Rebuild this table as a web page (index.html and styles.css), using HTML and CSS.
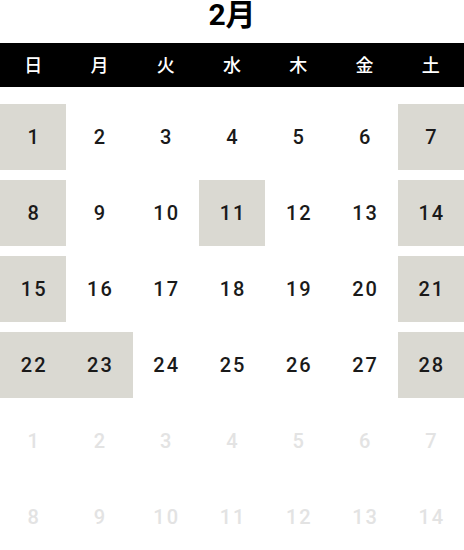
FILE: index.html
```html
<!DOCTYPE html>
<html lang="ja">
<head>
<meta charset="utf-8">
<title>2月</title>
<link rel="stylesheet" href="styles.css">
</head>
<body>
<div class="calendar">
  <h2 class="month">2月</h2>
  <div class="weekdays">
    <div>日</div><div>月</div><div>火</div><div>水</div><div>木</div><div>金</div><div>土</div>
  </div>
  <div class="days">
    <div class="day off">1</div><div class="day">2</div><div class="day">3</div><div class="day">4</div><div class="day">5</div><div class="day">6</div><div class="day off">7</div>
    <div class="day off">8</div><div class="day">9</div><div class="day">10</div><div class="day off">11</div><div class="day">12</div><div class="day">13</div><div class="day off">14</div>
    <div class="day off">15</div><div class="day">16</div><div class="day">17</div><div class="day">18</div><div class="day">19</div><div class="day">20</div><div class="day off">21</div>
    <div class="day off">22</div><div class="day off">23</div><div class="day">24</div><div class="day">25</div><div class="day">26</div><div class="day">27</div><div class="day off">28</div>
    <div class="day next">1</div><div class="day next">2</div><div class="day next">3</div><div class="day next">4</div><div class="day next">5</div><div class="day next">6</div><div class="day next">7</div>
    <div class="day next">8</div><div class="day next">9</div><div class="day next">10</div><div class="day next">11</div><div class="day next">12</div><div class="day next">13</div><div class="day next">14</div>
  </div>
</div>
</body>
</html>
```
FILE: styles.css
```css
html, body {
  margin: 0;
  padding: 0;
  background: #fff;
}
body {
  font-family: Roboto, "Noto Sans CJK JP", sans-serif;
  color: #1a1a1a;
}
.calendar {
  width: 464px;
}
.month {
  margin: 0;
  height: 43px;
  font-family: Roboto, "Noto Sans CJK JP", sans-serif;
  font-size: 30px;
  font-weight: 700;
  line-height: 30px;
  text-align: center;
  color: #000;
}
.weekdays {
  display: grid;
  grid-template-columns: repeat(7, 1fr);
  height: 44px;
  background: #000;
  color: #fff;
  font-family: "Noto Sans CJK JP", sans-serif;
  font-size: 18px;
  font-weight: 500;
}
.weekdays div {
  display: flex;
  align-items: center;
  justify-content: center;
  padding-bottom: 3px;
}
.days {
  display: grid;
  grid-template-columns: repeat(7, 1fr);
  grid-auto-rows: 66px;
  row-gap: 10px;
  margin-top: 17px;
}
.day {
  display: flex;
  align-items: center;
  justify-content: center;
  font-size: 20px;
  font-weight: 500;
  letter-spacing: 2px;
  text-indent: 2px;
}
.day.off {
  background: #dad9d2;
}
.day.next {
  color: #e3e3e3;
}
```
